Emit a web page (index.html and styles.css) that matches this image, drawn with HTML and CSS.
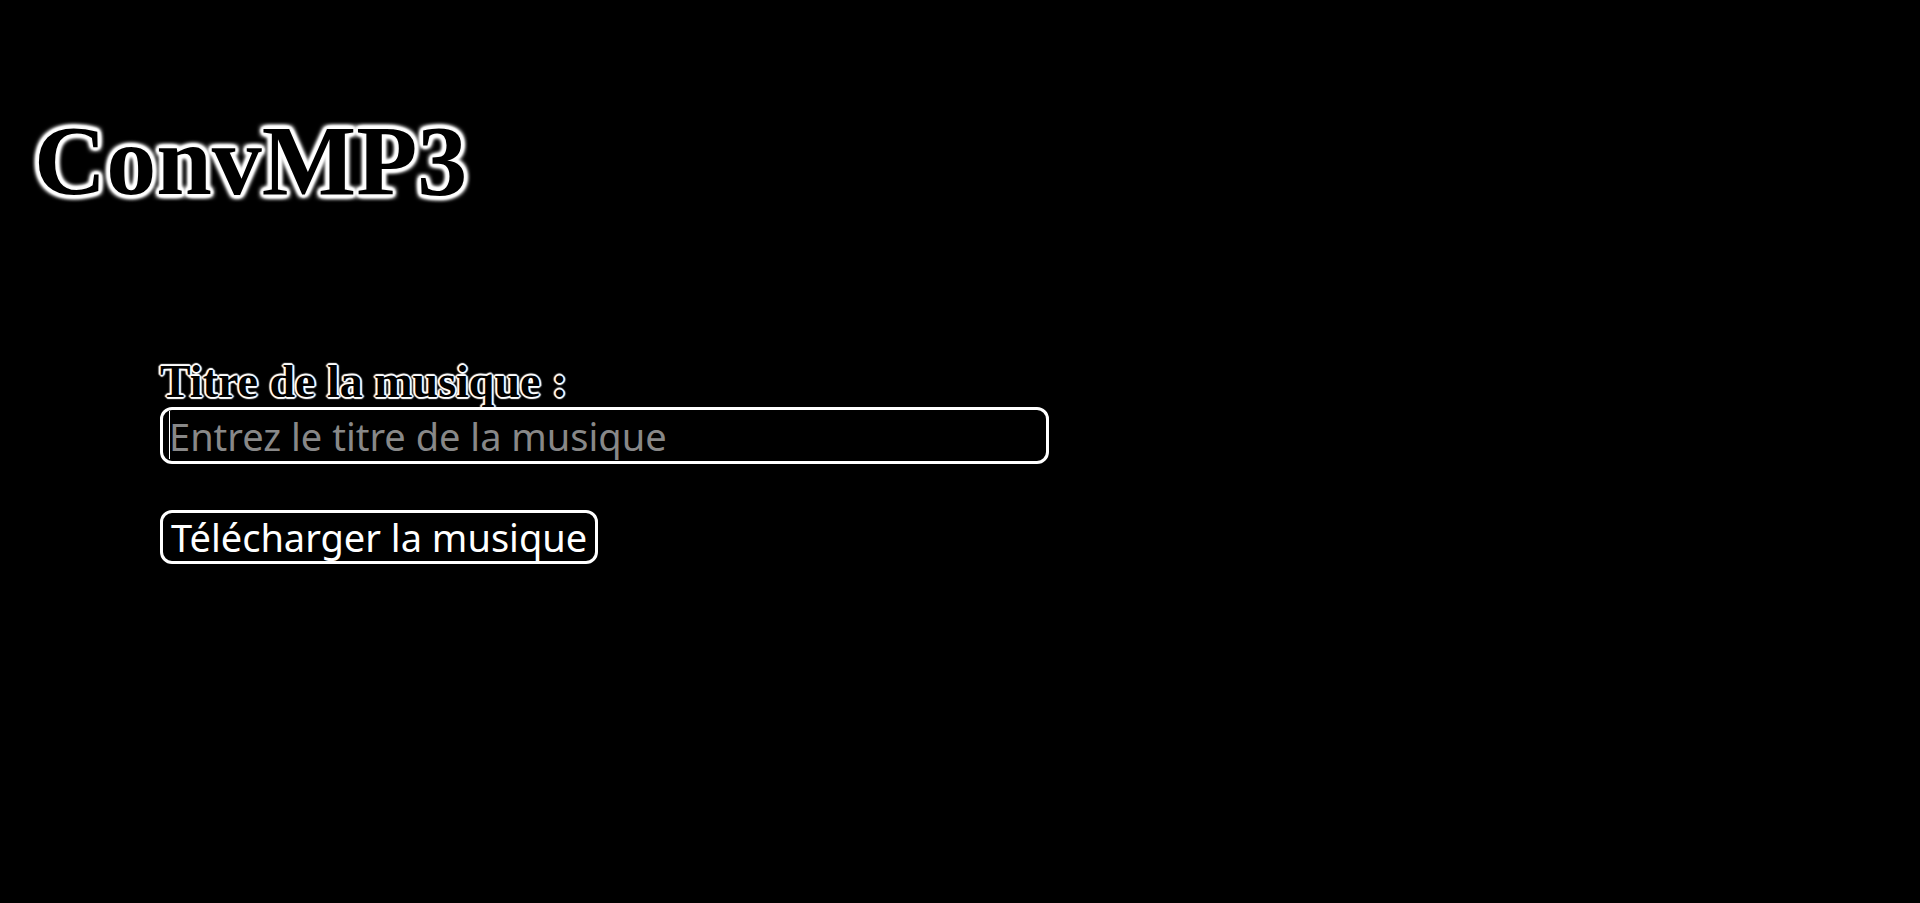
FILE: index.html
```html
<!DOCTYPE html>
<html lang="fr">
<head>
  <meta charset="utf-8">
  <meta name="viewport" content="width=device-width, initial-scale=1">
  <title>ConvMP3</title>
  <link rel="stylesheet" href="styles.css">
</head>
<body>
  <header class="header">
    <h1 class="title">ConvMP3</h1>
  </header>
  <main class="content">
    <form class="form">
      <label class="label" for="music-title">Titre de la musique :</label>
      <div class="field">
        <input class="input" id="music-title" name="title" type="text" placeholder="Entrez le titre de la musique">
        <span class="caret" aria-hidden="true"></span>
      </div>
      <button class="button" type="submit">Télécharger la musique</button>
    </form>
  </main>
</body>
</html>
```
FILE: styles.css
```css
* {
  box-sizing: border-box;
}

body {
  margin: 0;
  background: #000;
  color: #fff;
  font-family: "Liberation Serif", "Times New Roman", serif;
}

.header {
  padding: 103px 34px 0;
}

.title {
  margin: 0;
  color: #000;
  font-size: 100px;
  line-height: 116px;
  text-shadow:
    3px 0 4px #fff, -3px 0 4px #fff, 0 3px 4px #fff, 0 -3px 4px #fff,
    3px 3px 4px #fff, -3px 3px 4px #fff, 3px -3px 4px #fff, -3px -3px 4px #fff,
    3px 0 2px #fff, -3px 0 2px #fff, 0 3px 2px #fff, 0 -3px 2px #fff,
    2px 2px 2px #fff, -2px 2px 2px #fff, 2px -2px 2px #fff, -2px -2px 2px #fff;
}

.content {
  padding: 137px 160px 0;
}

.form {
  display: flex;
  flex-direction: column;
  align-items: flex-start;
}

.label {
  color: #000;
  font-size: 46px;
  font-weight: bold;
  line-height: 51px;
  text-shadow:
    1px 1px 1px #fff, -1px 1px 1px #fff, 1px -1px 1px #fff, -1px -1px 1px #fff,
    2px 0 1px #fff, -2px 0 1px #fff, 0 2px 1px #fff, 0 -2px 1px #fff,
    1px 1px 2px #fff, -1px -1px 2px #fff;
}

.field {
  position: relative;
  width: 100%;
  max-width: 889px;
  margin-bottom: 46px;
}

.input,
.button {
  border: 3px solid #fff;
  border-radius: 12px;
  background: #000;
  color: #fff;
  font-family: Tahoma, "Noto Sans", sans-serif;
  font-size: 38px;
}

.input {
  display: block;
  width: 100%;
  height: 57px;
  padding: 0 6px;
  outline: none;
}

.input::placeholder {
  color: #888;
  opacity: 1;
}

.caret {
  position: absolute;
  top: 4px;
  bottom: 5px;
  left: 9px;
  width: 1px;
  background: #fff;
}

.button {
  height: 54px;
  padding: 0 8px;
  line-height: 48px;
}
```
